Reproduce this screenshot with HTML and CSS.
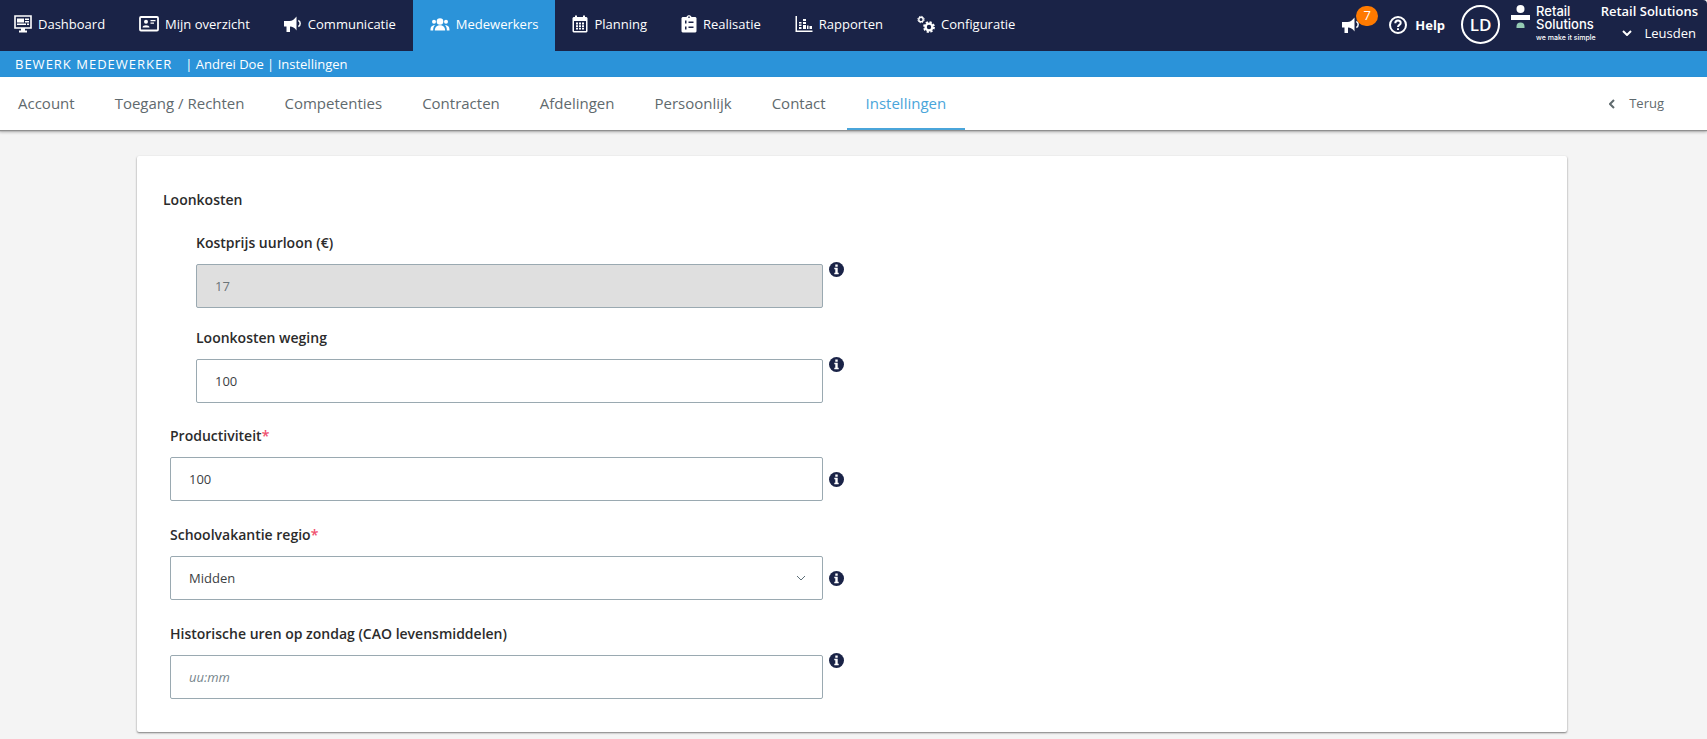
FILE: index.html
```html
<!DOCTYPE html>
<html lang="nl">

<head>
    <meta charset="UTF-8">
    <meta name="viewport" content="width=device-width, initial-scale=1.0">
    <title>Bewerk medewerker | Instellingen</title>
    <link rel="stylesheet" href="styles.css">
</head>

<body>
    <svg class="sprite" aria-hidden="true">
        <symbol id="bullhorn" viewBox="0 0 18 18">
            <path d="M0 6h5.500C8 6 10 4.500 12.500 1.500v14C10.500 12.500 8.500 11.500 6 11.500V17H2.500v-5.500H0z" />
            <path d="M14.300 5.500c2.500 1 2.500 5 0 6" fill="none" stroke="currentColor" stroke-width="1.500" />
        </symbol>
        <symbol id="info" viewBox="0 0 15 15">
            <circle cx="7.500" cy="7.500" r="7.500" />
            <path d="M6.300 2.500h2.400v2.200H6.300zM5.300 5.800h3.400v5h1v1.500H5.300v-1.500h1V7.300h-1z" fill="#fff" />
        </symbol>
    </svg>

    <header class="topbar">
        <nav class="menu">
            <a href="#">
                <svg class="icon" viewBox="0 0 18 18">
                    <path d="M1 1h16v12H1z" fill="none" stroke="currentColor" stroke-width="1.600" />
                    <path d="M3 3.500h7v4H3zM11 3.500h4V5h-4zM11 6h4v1.500h-4zM3 8.500h9V10H3zM13 8.500h2V10h-2zM7 13h4v2.500h2V17.500H5v-2h2z" />
                </svg>
                Dashboard</a>
            <a href="#">
                <svg class="icon wide" viewBox="0 0 20 18">
                    <rect x="1" y="2" width="18" height="13.500" rx="1" fill="none" stroke="currentColor" stroke-width="1.800" />
                    <circle cx="7" cy="6.800" r="2" />
                    <path d="M3.500 12.500c0-3 7-3 7 0zM11.500 5h5v1.300h-5zM11.500 7.500h3.500v1.300h-3.500z" />
                </svg>
                Mijn overzicht</a>
            <a href="#">
                <svg class="icon"><use href="#bullhorn" /></svg>
                Communicatie</a>
            <a href="#" class="active">
                <svg class="icon wide" viewBox="0 0 20 18">
                    <circle cx="10" cy="6.500" r="3.300" />
                    <circle cx="4" cy="6.800" r="2" />
                    <circle cx="16" cy="6.800" r="2" />
                    <path d="M4.800 15.500c0-7 10.400-7 10.400 0zM.5 15.500c0-3 .5-5 4.500-5.500-1.500 1.500-1.800 3-1.800 5.500zM19.500 15.500c0-3-.5-5-4.500-5.500 1.500 1.500 1.800 3 1.800 5.500z" />
                </svg>
                Medewerkers</a>
            <a href="#">
                <svg class="icon small" viewBox="0 0 16 18">
                    <path fill-rule="evenodd" d="M1.500 2H3V.5h2V2h6V.5h2V2h1.500l1 1v13.500l-1 1h-13l-1-1V3zM2 6v10h12V6z" />
                    <path d="M4 7.500h2v2H4zM7 7.500h2v2H7zM10 7.500h2v2h-2zM4 10.200h2v2H4zM7 10.200h2v2H7zM10 10.200h2v2h-2zM4 12.900h2v1.600H4zM7 12.900h2v1.600H7zM10 12.900h2v1.600h-2z" />
                </svg>
                Planning</a>
            <a href="#">
                <svg class="icon small" viewBox="0 0 16 18">
                    <path fill-rule="evenodd" d="M1.500 2H5.500c.5-2.500 4.500-2.500 5 0h4l1 1v13.500l-1 1h-13l-1-1V3zM4 5.500v3h1.500v-3zM7.500 6.500V8h5V6.500zM4 11.500v3h1.500v-3zM7.500 11.500V13h5v-1.500zM7.300 1.500v1.500h1.400V1.500z" />
                </svg>
                Realisatie</a>
            <a href="#">
                <svg class="icon" viewBox="0 0 18 18">
                    <path d="M.5 1H2v14.500h15.500V17H.5zM4 7h2.500v1.500H4zM4 9.500h2.500V11H4zM4 12h2.500v2H4zM8 4h3v2H8zM8 7h3v2H8zM8 10h3v4H8zM12 10.500h1.500V14H12zM14.500 11h2.500v3h-2.500z" />
                </svg>
                Rapporten</a>
            <a href="#">
                <svg class="icon outline" viewBox="0 0 18 18">
                    <circle cx="4" cy="4.500" r="2.200" stroke-width="1.400" />
                    <circle cx="4" cy="4.500" r="3.200" stroke-width="1" stroke-dasharray="1.400 1.113" />
                    <circle cx="12" cy="12" r="3.400" stroke-width="2.400" />
                    <circle cx="12" cy="12" r="5" stroke-width="1.800" stroke-dasharray="2.200 1.727" />
                </svg>
                Configuratie</a>
        </nav>

        <div class="account">
            <a href="#" class="news" aria-label="Nieuws">
                <svg class="icon"><use href="#bullhorn" /></svg>
                <span class="badge">7</span>
            </a>
            <a href="#" class="help">
                <svg class="icon outline" viewBox="0 0 18 18">
                    <circle cx="9" cy="9" r="8" />
                    <path d="M6.300 7.200c0-3.500 5.400-3.500 5.400-.3 0 2-2.700 2-2.700 4.100M9 12.200v1.800" />
                </svg>
                Help</a>
            <a href="#" class="avatar">LD</a>
            <div class="logo">
                <svg class="logo-mark" viewBox="0 0 19 24">
                    <circle cx="9.500" cy="4" r="4" fill="#fff" />
                    <path d="M0 10h19v5H0z" fill="#fff" />
                    <path d="M5.500 23v-1.500a4 4 0 0 1 8 0V23z" fill="#94cbb3" />
                </svg>
                <div class="logo-text">Retail<br>Solutions<small>we make it simple</small></div>
            </div>
            <div class="company">
                <strong>Retail Solutions</strong>
                <button type="button" class="location">
                    <svg class="chevron" viewBox="0 0 10 6"><path d="M1 1l4 4 4-4" /></svg>
                    Leusden</button>
            </div>
        </div>
    </header>

    <div class="crumbs">
        <span class="crumb-title">BEWERK MEDEWERKER</span>
        <span>| Andrei Doe | Instellingen</span>
    </div>

    <nav class="tabs">
        <a href="#">Account</a>
        <a href="#">Toegang / Rechten</a>
        <a href="#">Competenties</a>
        <a href="#">Contracten</a>
        <a href="#">Afdelingen</a>
        <a href="#">Persoonlijk</a>
        <a href="#">Contact</a>
        <a href="#" class="active">Instellingen</a>
        <a href="#" class="back">
            <svg class="chevron-left" viewBox="0 0 6 10"><path d="M5 1L1 5l4 4" /></svg>
            Terug</a>
    </nav>

    <main class="content">
        <form class="card">
            <div class="form">
                <h2>Loonkosten</h2>
                <div class="group">
                    <div class="field">
                        <label for="uurloon">Kostprijs uurloon (€)</label>
                        <div class="control">
                            <input type="text" id="uurloon" value="17" disabled>
                            <svg class="info top"><use href="#info" /></svg>
                        </div>
                    </div>
                    <div class="field">
                        <label for="weging">Loonkosten weging</label>
                        <div class="control">
                            <input type="text" id="weging" value="100">
                            <svg class="info top"><use href="#info" /></svg>
                        </div>
                    </div>
                </div>
                <div class="fields">
                    <div class="field">
                        <label for="productiviteit">Productiviteit<span class="required">*</span></label>
                        <div class="control">
                            <input type="text" id="productiviteit" value="100">
                            <svg class="info"><use href="#info" /></svg>
                        </div>
                    </div>
                    <div class="field">
                        <label for="regio">Schoolvakantie regio<span class="required">*</span></label>
                        <div class="control">
                            <div class="select">
                                <select id="regio">
                                    <option>Midden</option>
                                </select>
                                <svg class="chevron" viewBox="0 0 10 6"><path d="M1 1l4 4 4-4" /></svg>
                            </div>
                            <svg class="info"><use href="#info" /></svg>
                        </div>
                    </div>
                    <div class="field">
                        <label for="zondag">Historische uren op zondag (CAO levensmiddelen)</label>
                        <div class="control">
                            <input type="text" id="zondag" placeholder="uu:mm">
                            <svg class="info top"><use href="#info" /></svg>
                        </div>
                    </div>
                </div>
            </div>
        </form>
    </main>
</body>

</html>
```
FILE: styles.css
```css
* {
    box-sizing: border-box;
}

body {
    margin: 0;
    background-color: #f4f4f4;
    color: #2b2b2b;
    font-family: "Open Sans", "Noto Sans", sans-serif;
    font-size: 13px;
}

a {
    color: inherit;
    text-decoration: none;
}

.sprite {
    display: none;
}

svg {
    fill: currentColor;
    flex: none;
}

.icon {
    width: 18px;
    height: 18px;
}

.icon.wide {
    width: 20px;
}

.icon.small {
    width: 16px;
}

.icon.outline,
.chevron,
.chevron-left {
    fill: none;
    stroke: currentColor;
    stroke-width: 2;
}

.chevron {
    width: 10px;
    height: 6px;
}

.chevron-left {
    width: 6px;
    height: 10px;
}

/* top bar */
.topbar {
    display: flex;
    justify-content: space-between;
    height: 51px;
    border-top-right-radius: 4px;
    background-color: #1a2347;
    color: #fff;
}

.menu {
    display: flex;
    margin-left: -3px;
}

.menu a {
    display: flex;
    align-items: center;
    gap: 6px;
    padding: 0 17px 3px;
}

.menu a.active {
    background-color: #2b93d9;
}

.account {
    display: flex;
    align-items: center;
    padding: 0 9px 2px 0;
}

.news {
    position: relative;
    display: flex;
    margin-right: 29px;
}

.badge {
    position: absolute;
    left: 14px;
    top: -10px;
    width: 22px;
    height: 20px;
    border-radius: 10px;
    background-color: #ff7a00;
    line-height: 18px;
    text-align: center;
}

.help {
    display: flex;
    align-items: center;
    gap: 8px;
    margin-right: 16px;
    font-weight: 700;
}

.avatar {
    width: 39px;
    height: 39px;
    margin-right: 11px;
    border: 2px solid #fff;
    border-radius: 50%;
    font-size: 17px;
    font-weight: 600;
    line-height: 35px;
    text-align: center;
}

.logo {
    display: flex;
    align-self: flex-start;
    gap: 6px;
    margin-right: 5px;
    padding-top: 5px;
}

.logo-mark {
    width: 19px;
    height: 24px;
}

.logo-text {
    font-family: Inter, sans-serif;
    font-size: 13px;
    font-weight: 500;
    line-height: 13px;
}

.logo-text small {
    display: block;
    font-size: 7px;
    white-space: nowrap;
}

.company {
    display: flex;
    flex-direction: column;
    align-items: flex-end;
    align-self: flex-start;
    line-height: 22px;
}

.company strong {
    font-weight: 600;
}

.location {
    display: flex;
    align-items: center;
    gap: 13px;
    padding: 0 2px 0 0;
    border: 0;
    background: none;
    color: inherit;
    font: inherit;
}

/* breadcrumb */
.crumbs {
    display: flex;
    gap: 13px;
    padding: 0 15px;
    background-color: #2b93d9;
    color: #fff;
    line-height: 26px;
}

.crumb-title {
    letter-spacing: 1px;
}

/* tabs */
.tabs {
    display: flex;
    gap: 2px;
    height: 53px;
    margin-left: -1px;
    background-color: #fff;
    box-shadow: 0 1px 1px #8f8f8f, 0 2px 3px rgba(0, 0, 0, 0.3);
    color: #5f6a6e;
    font-size: 15px;
}

.tabs a {
    padding: 0 19px;
    border-bottom: 2px solid transparent;
    line-height: 53px;
}

.tabs .active {
    border-color: #4aa5da;
    color: #4aa5da;
}

.tabs .back {
    display: flex;
    align-items: center;
    gap: 14px;
    margin-left: auto;
    padding-right: 43px;
    border-bottom: 0;
    font-size: 13px;
}

/* form */
.content {
    padding: 26px 140px 7px 137px;
}

.card {
    border-radius: 2px;
    background-color: #fff;
    box-shadow: 0 1px 2px rgba(0, 0, 0, 0.5);
}

.form {
    width: 50%;
    padding: 34px 8px 33px 26px;
}

h2 {
    margin: 0 0 23px;
    font-size: 14px;
    font-weight: 600;
    line-height: 20px;
}

.group,
.fields {
    display: flex;
    flex-direction: column;
    gap: 24px;
    padding-left: 7px;
}

.group {
    gap: 20px;
    margin-bottom: 23px;
    padding-left: 33px;
}

.field label {
    display: block;
    margin-bottom: 11px;
    font-size: 14px;
    font-weight: 600;
    line-height: 20px;
}

.required {
    color: #f0506e;
}

.control {
    display: flex;
    align-items: center;
    gap: 6px;
}

.control input,
.control select {
    width: 100%;
    height: 44px;
    padding: 0 18px;
    border: 1px solid #9aa9b1;
    border-radius: 2px;
    background-color: #fff;
    color: #3c4144;
    font: inherit;
    appearance: none;
}

.control input:disabled {
    background-color: #dfdfdf;
    color: #6b7478;
}

.control input::placeholder {
    color: #76858c;
    font-style: italic;
}

.select {
    position: relative;
    flex: 1;
}

.select .chevron {
    position: absolute;
    right: 17px;
    top: 19px;
    color: #5f7079;
    stroke-width: 1;
}

.info {
    width: 15px;
    height: 15px;
    color: #1a2347;
}

.info.top {
    align-self: flex-start;
    margin-top: -2px;
}
```
